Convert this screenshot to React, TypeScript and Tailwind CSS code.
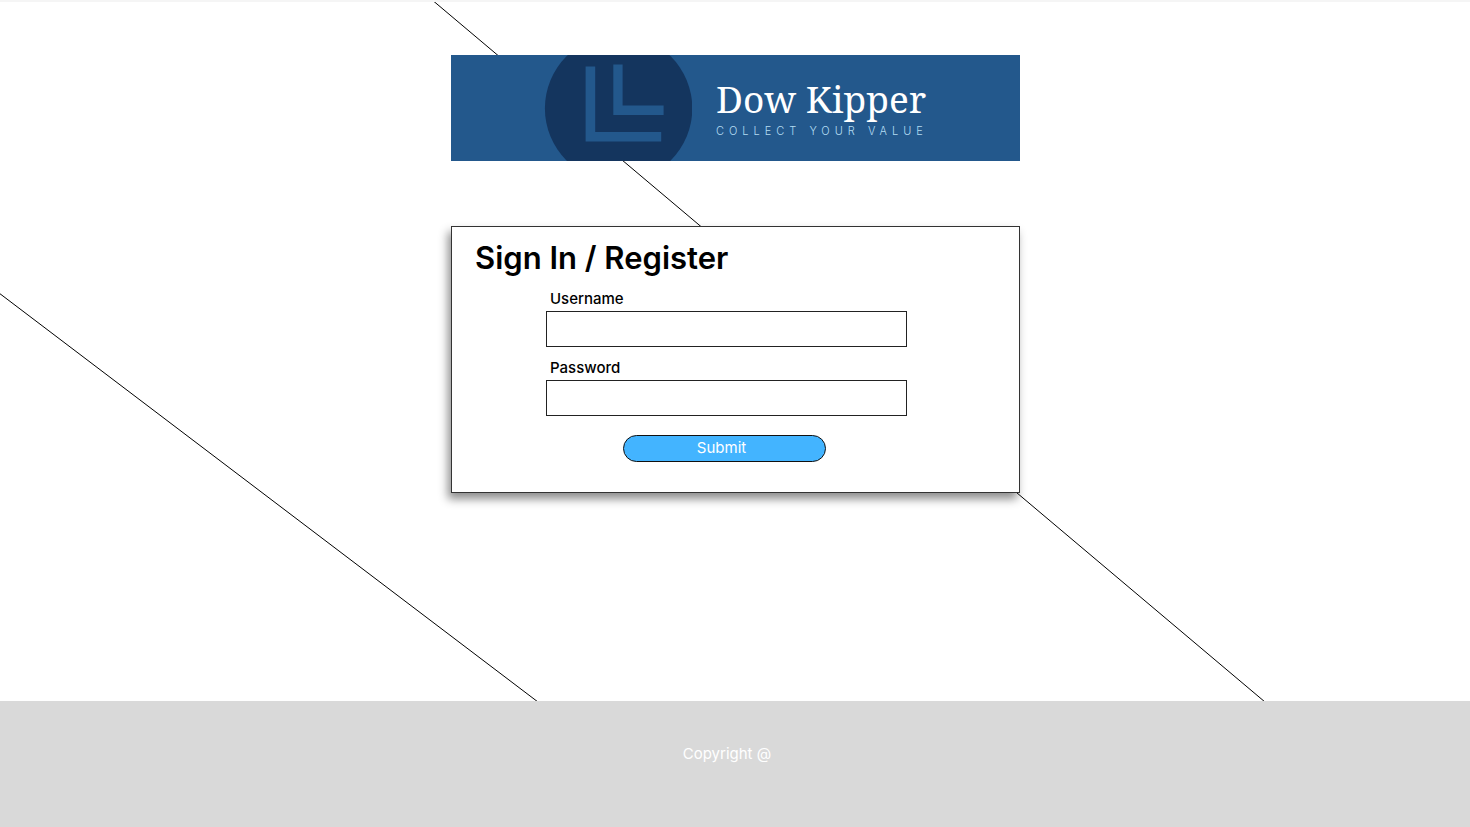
import type { InputHTMLAttributes } from "react";

function BackgroundLines() {
  return (
    <svg
      className="absolute inset-0 -z-10 h-full w-full"
      aria-hidden="true"
      stroke="#000"
      strokeWidth="1"
    >
      <line x1="433.4" y1="-1" x2="1265" y2="700" />
      <line x1="-1" y1="291" x2="538" y2="700" />
    </svg>
  );
}

function LogoMark() {
  return (
    <svg viewBox="0 0 148 106" className="h-[106px] w-[148px] shrink-0" aria-hidden="true">
      <circle cx="74.6" cy="53.4" r="73.7" fill="#14355e" />
      <path d="M41.6 11.6h9.6v65.4h66v9.6H41.6z" fill="#23588c" />
      <path d="M69.3 9.6h9.3v41h41v9.5H69.3z" fill="#23588c" />
    </svg>
  );
}

function Banner() {
  return (
    <header className="flex h-[106px] w-full max-w-[569px] items-center gap-6 overflow-hidden bg-[#23588c] pl-[93px]">
      <LogoMark />
      <div className="flex flex-col gap-1 pt-0.5 whitespace-nowrap">
        <p className="font-['Noto_Serif','Droid_Serif','Liberation_Serif',serif] text-[37px] leading-10 text-white">
          Dow Kipper
        </p>
        <p className="text-[11px] leading-4 font-light tracking-[5px] text-[#b4dcf2]">
          COLLECT YOUR VALUE
        </p>
      </div>
    </header>
  );
}

function Field({ id, label, ...rest }: { id: string; label: string } & InputHTMLAttributes<HTMLInputElement>) {
  return (
    <div className="flex flex-col">
      <label htmlFor={id} className="pt-px pl-1 text-[15px] leading-6 font-medium">
        {label}
      </label>
      <input id={id} name={id} className="h-9 w-full border border-[#222] bg-white px-2 outline-none" {...rest} />
    </div>
  );
}

export default function App() {
  return (
    <div className="flex min-h-screen flex-col border-t-2 border-[#f5f5f5] bg-white font-[Inter,sans-serif] text-black">
      <main className="relative isolate flex flex-1 flex-col items-center gap-[65px] overflow-hidden pt-[53px] pb-10 pl-px">
        <BackgroundLines />
        <Banner />
        <section className="w-full max-w-[569px] border border-[#333] bg-white px-[23px] pt-[11px] pb-[30px] shadow-[-3px_6px_9px_rgba(0,0,0,0.45)]">
          <h1 className="text-[31px] leading-10 font-semibold">Sign In / Register</h1>
          <form
            className="ml-[71px] flex max-w-[361px] flex-col gap-2 pt-2"
            onSubmit={(e) => e.preventDefault()}
          >
            <Field id="username" label="Username" type="text" autoComplete="username" />
            <Field id="password" label="Password" type="password" autoComplete="current-password" />
            <button
              type="submit"
              className="mt-[11px] ml-[77px] flex h-[27px] w-[203px] justify-center rounded-full border border-[#111] bg-[#43b4ff] pr-1.5 text-[15px] leading-6 text-white"
            >
              Submit
            </button>
          </form>
        </section>
      </main>
      <footer className="flex h-[126px] justify-center bg-[#d9d9d9] pt-[41px] pr-4 text-[15px] leading-6 text-white">
        <p>Copyright @</p>
      </footer>
    </div>
  );
}
